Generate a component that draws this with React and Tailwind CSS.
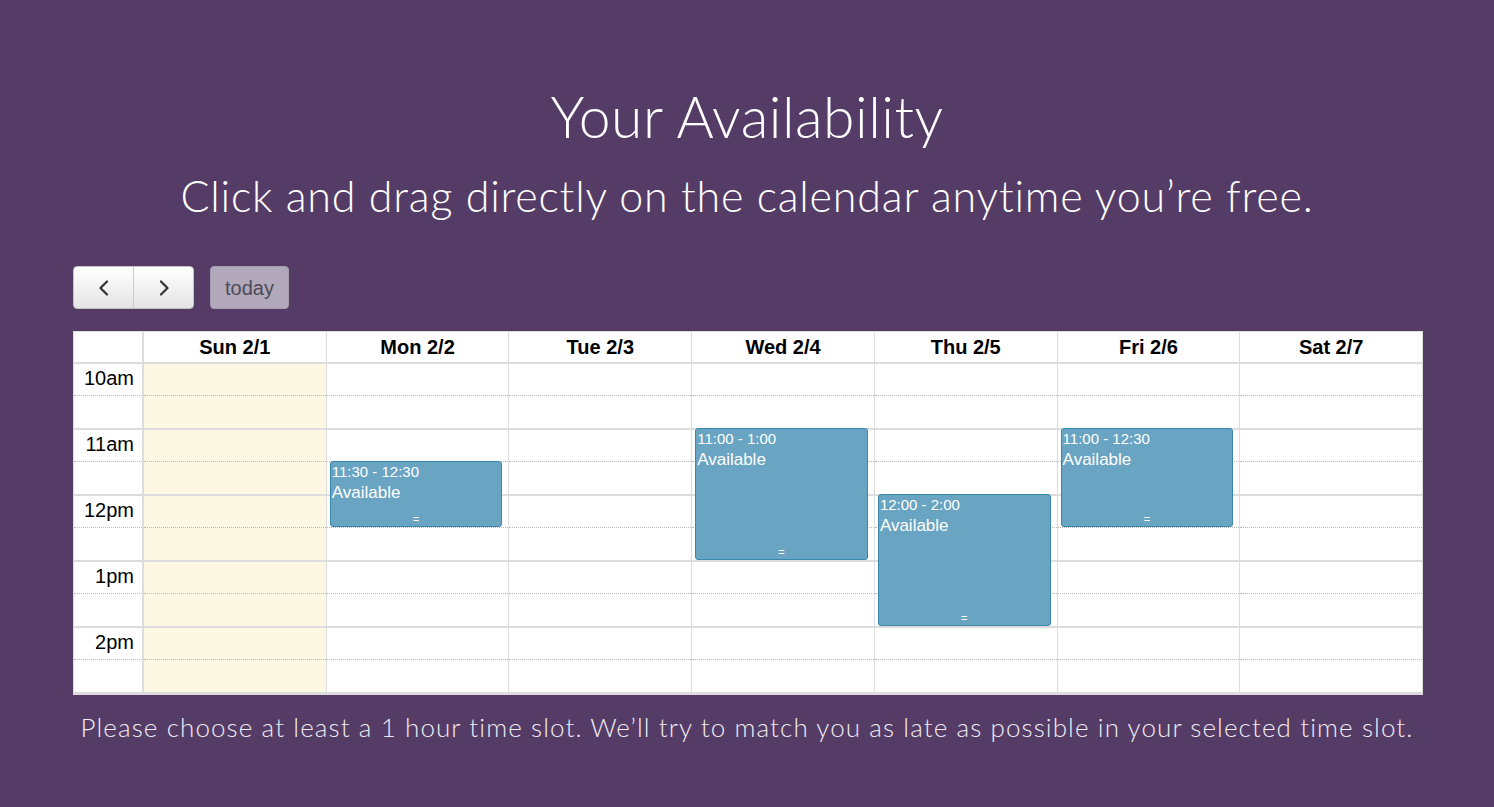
import React from "react";

const days = ["Sun 2/1", "Mon 2/2", "Tue 2/3", "Wed 2/4", "Thu 2/5", "Fri 2/6", "Sat 2/7"];
const events = {
  1: [{ start: 3, len: 2, time: "11:30 - 12:30" }],
  3: [{ start: 2, len: 4, time: "11:00 - 1:00" }],
  4: [{ start: 4, len: 4, time: "12:00 - 2:00" }],
  5: [{ start: 2, len: 3, time: "11:00 - 12:30" }],
};
const hours = ["10am", "11am", "12pm", "1pm", "2pm"];
const slots = [0, 1, 2, 3, 4, 5, 6, 7, 8, 9];

function Slot({ i, children }) {
  return i % 2 === 0 ? (
    <div className="h-[33px] border-t-2 border-solid border-[#dddddd]">{children}</div>
  ) : (
    <div className="h-[33px] border-t border-dotted border-[#b8b8b8]">{children}</div>
  );
}

function Chevron({ dir }) {
  return (
    <svg width="14" height="16" viewBox="0 0 14 16" fill="none" stroke="#333" strokeWidth="2.2" strokeLinecap="round" strokeLinejoin="round">
      {dir === "left" ? <polyline points="10,1.5 3.5,8 10,14.5" /> : <polyline points="4,1.5 10.5,8 4,14.5" />}
    </svg>
  );
}

export default function App() {
  return (
    <div className="min-h-[807px] w-full bg-[#553c67] text-white" style={{ fontFamily: "Lato, 'Open Sans', sans-serif" }}>
      <div className="px-[73px] pt-[84px]">
        <h1 className="text-center text-[57px] font-light leading-[64px] tracking-[0.5px]">Your Availability</h1>
        <p className="mt-[22px] text-center text-[43px] font-light leading-[52px] tracking-[0.8px]">
          Click and drag directly on the calendar anytime you&#8217;re free.
        </p>

        <div className="mt-[44px] flex items-center gap-[16px]" style={{ fontFamily: "'Liberation Sans', Arial, sans-serif" }}>
          <div className="flex h-[43px] w-[121px] overflow-hidden rounded-[4px] border border-[#c4c4c4] bg-gradient-to-b from-white to-[#e4e4e4]">
            <button className="flex h-full w-[60px] items-center justify-center border-r border-[#cccccc]">
              <Chevron dir="left" />
            </button>
            <button className="flex h-full flex-1 items-center justify-center">
              <Chevron dir="right" />
            </button>
          </div>
          <button className="flex h-[43px] w-[79px] items-center justify-center rounded-[4px] border border-[#a79db1] bg-[#b1a8bb] text-[20px] text-[#4d4a55]">
            today
          </button>
        </div>

        <div
          className="mt-[22px] w-[1350px] border-x border-t border-b-[3px] border-[#dcdcdc] bg-white text-black"
          style={{ fontFamily: "'Liberation Sans', Arial, sans-serif" }}
        >
          <div className="flex h-[30px]">
            <div className="w-[70px] border-r-2 border-[#dddddd]" />
            {days.map((d, i) => (
              <div
                key={d}
                className={
                  i === 0
                    ? "flex flex-1 items-center justify-center text-[20px] font-bold"
                    : "flex flex-1 items-center justify-center border-l border-[#dddddd] text-[20px] font-bold"
                }
              >
                {d}
              </div>
            ))}
          </div>
          <div className="flex">
            <div className="w-[70px] border-r-2 border-[#dddddd]">
              {slots.map((i) => (
                <Slot key={i} i={i}>
                  {i % 2 === 0 ? (
                    <div className="pr-[8px] pt-[3px] text-right text-[20px] leading-[23px]">{hours[i / 2]}</div>
                  ) : null}
                </Slot>
              ))}
            </div>
            {days.map((d, ci) => (
              <div
                key={d}
                className={
                  ci === 0
                    ? "relative flex-1 bg-[#fcf8e3]"
                    : "relative flex-1 border-l border-[#dddddd]"
                }
              >
                {slots.map((i) => (
                  <Slot key={i} i={i} />
                ))}
                {(events[ci] || []).map((e) => (
                  <div
                    key={e.time}
                    className="absolute left-[3px] right-[6px] overflow-hidden rounded-[3px] border border-[#3a87ad] bg-[#69a4c2] px-[1px] text-white"
                    style={{ top: e.start * 33, height: e.len * 33 }}
                  >
                    <div className="pt-[1px] text-[15px] leading-[18px]">{e.time}</div>
                    <div className="pt-[1px] text-[17px] leading-[21px]">Available</div>
                    <div className="absolute bottom-[1px] left-0 right-0 text-center text-[11px] leading-[11px]">=</div>
                  </div>
                ))}
              </div>
            ))}
          </div>
        </div>

        <p className="mt-[16px] text-center text-[26px] font-light leading-[32px] tracking-[1.1px] text-[#f0ecf2]">
          Please choose at least a 1 hour time slot. We&#8217;ll try to match you as late as possible in your selected time slot.
        </p>
      </div>
    </div>
  );
}
